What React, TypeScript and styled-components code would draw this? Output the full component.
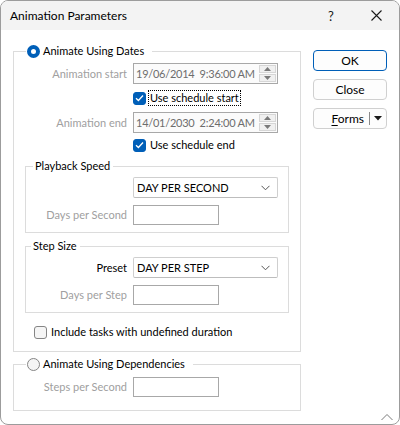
import React from "react";
import styled, { createGlobalStyle } from "styled-components";

const GlobalStyle = createGlobalStyle`
  html, body { margin: 0; padding: 0; background: #ffffff; }
  body {
    font-family: Lato, "Noto Sans", sans-serif;
    font-size: 11px;
    color: #000000;
  }
  * { box-sizing: border-box; }
`;

const Window = styled.div`
  position: relative;
  width: 400px;
  height: 425px;
  border: 1px solid #9c9c9c;
  border-radius: 8px;
  overflow: hidden;
  display: flex;
  flex-direction: column;
  background: #ffffff;
`;

const TitleBar = styled.div`
  height: 29px;
  flex: none;
  display: flex;
  align-items: center;
  background: #f3f3f3;
  padding-left: 9px;
`;

const TitleText = styled.div`
  flex: 1;
  font-size: 12px;
  line-height: 16px;
`;

const TitleButton = styled.div<{ $w: number }>`
  width: ${(p) => p.$w}px;
  height: 29px;
  display: flex;
  align-items: center;
  justify-content: center;
  font-size: 13px;
  color: #1a1a1a;
`;

const Body = styled.div`
  flex: 1;
  display: flex;
  align-items: flex-start;
  gap: 12px;
  padding: 13px 0 0 12px;
`;

const LeftColumn = styled.div`
  width: 288px;
  display: flex;
  flex-direction: column;
`;

const RightColumn = styled.div`
  width: 74px;
  margin-top: 7px;
  display: flex;
  flex-direction: column;
  gap: 8px;
`;

const Group = styled.fieldset<{ $inset?: boolean; $mt?: number; $pb?: number }>`
  margin: ${(p) => p.$mt ?? 0}px ${(p) => (p.$inset ? 11 : 0)}px 0 ${(p) => (p.$inset ? 11 : 0)}px;
  padding: 0 0 ${(p) => p.$pb ?? 0}px 0;
  border: 1px solid #dcdcdc;
  min-width: 0;
  display: flex;
  flex-direction: column;
`;

const Legend = styled.legend<{ $ml: number; $pl?: number; $pr?: number }>`
  margin-left: ${(p) => p.$ml}px;
  padding: 0 ${(p) => p.$pr ?? 3}px 0 ${(p) => p.$pl ?? 2}px;
  line-height: 16px;
  height: 16px;
  display: flex;
  align-items: center;
  gap: 3px;
  white-space: nowrap;
`;

const Row = styled.div<{ $label: number; $mt: number; $h?: number }>`
  display: grid;
  grid-template-columns: ${(p) => p.$label}px auto;
  column-gap: 6px;
  align-items: center;
  margin-top: ${(p) => p.$mt}px;
  height: ${(p) => p.$h ?? 21}px;
`;

const Label = styled.div<{ $disabled?: boolean }>`
  text-align: right;
  white-space: nowrap;
  color: ${(p) => (p.$disabled ? "#a0a0a0" : "#000000")};
  line-height: 16px;
`;

const DateField = styled.div`
  width: 145px;
  height: 21px;
  border: 1px solid #a8a8a8;
  background: #fbfbfb;
  display: flex;
  align-items: center;
  padding-left: 2px;
  color: #6d6d6d;
  white-space: pre;
`;

const DateText = styled.div`
  flex: 1;
  line-height: 16px;
  letter-spacing: -0.25px;
`;

const Spinner = styled.div`
  width: 17px;
  height: 17px;
  margin-right: 1px;
  display: flex;
  flex-direction: column;
  gap: 1px;
`;

const SpinHalf = styled.div`
  flex: 1;
  background: #f0f0f0;
  border: 1px solid #d6d6d6;
  display: flex;
  align-items: center;
  justify-content: center;
`;

const Combo = styled.div`
  width: 145px;
  height: 21px;
  border: 1px solid #cfcfcf;
  border-bottom-color: #bdbdbd;
  border-radius: 2px;
  background: #ffffff;
  display: flex;
  align-items: center;
  padding: 0 7px 0 3px;
`;

const ComboText = styled.div`
  flex: 1;
  line-height: 16px;
  white-space: nowrap;
`;

const TextBox = styled.div`
  width: 86px;
  height: 20px;
  border: 1px solid #a8a8a8;
  background: #ffffff;
`;

const CheckRow = styled.div<{ $ml: number; $mt: number }>`
  display: flex;
  align-items: center;
  gap: 2px;
  margin-left: ${(p) => p.$ml}px;
  margin-top: ${(p) => p.$mt}px;
  height: 16px;
`;

const Box = styled.div<{ $checked?: boolean }>`
  width: 13px;
  height: 13px;
  flex: none;
  border-radius: 3px;
  border: 1px solid ${(p) => (p.$checked ? "#005fb8" : "#858585")};
  background: ${(p) => (p.$checked ? "#005fb8" : "#f5f5f5")};
  display: flex;
  align-items: center;
  justify-content: center;
`;

const Radio = styled.div<{ $checked?: boolean }>`
  width: 13px;
  height: 13px;
  flex: none;
  border-radius: 50%;
  border: ${(p) => (p.$checked ? "4px solid #005fb8" : "1px solid #858585")};
  background: ${(p) => (p.$checked ? "#ffffff" : "#f5f5f5")};
`;

const CheckText = styled.span<{ $focus?: boolean }>`
  line-height: 14px;
  padding: 0 1px;
  border: 1px dotted ${(p) => (p.$focus ? "#000000" : "transparent")};
  white-space: nowrap;
`;

const Button = styled.div<{ $default?: boolean }>`
  height: 21px;
  border: 1px solid ${(p) => (p.$default ? "#005fb8" : "#d0d0d0")};
  border-radius: 4px;
  background: #fdfdfd;
  display: flex;
  align-items: center;
  justify-content: center;
  line-height: 16px;
  font-size: 12px;
`;

const SplitButton = styled(Button)`
  justify-content: flex-end;
  padding-right: 4px;
`;

const SplitText = styled.span`
  margin-right: 5px;
`;

const Divider = styled.div`
  width: 1px;
  height: 13px;
  background: #8a8a8a;
  margin-right: 4px;
`;

const Underline = styled.span`
  text-decoration: underline;
  text-underline-offset: 2px;
`;

const Grip = styled.div`
  position: absolute;
  right: 6px;
  bottom: 6px;
  width: 12px;
  height: 8px;
`;

const Chevron = () => (
  <svg width="9" height="6" viewBox="0 0 9 6">
    <path d="M0.5 0.8 L4.5 4.8 L8.5 0.8" fill="none" stroke="#555" strokeWidth="1" />
  </svg>
);

const Tick = () => (
  <svg width="9" height="8" viewBox="0 0 9 8">
    <path d="M1 4.2 L3.4 6.5 L8 1.5" fill="none" stroke="#fff" strokeWidth="1.3" />
  </svg>
);

const Up = () => (
  <svg width="7" height="4" viewBox="0 0 7 4">
    <path d="M0 4 L3.5 0 L7 4 Z" fill="#7a7a7a" />
  </svg>
);

const Down = () => (
  <svg width="7" height="4" viewBox="0 0 7 4">
    <path d="M0 0 L3.5 4 L7 0 Z" fill="#7a7a7a" />
  </svg>
);

const DateInput = ({ value }: { value: string }) => (
  <DateField>
    <DateText>{value}</DateText>
    <Spinner>
      <SpinHalf>
        <Up />
      </SpinHalf>
      <SpinHalf>
        <Down />
      </SpinHalf>
    </Spinner>
  </DateField>
);

const Select = ({ value }: { value: string }) => (
  <Combo>
    <ComboText>{value}</ComboText>
    <Chevron />
  </Combo>
);

export default function App() {
  return (
    <>
      <GlobalStyle />
      <Window>
        <TitleBar>
          <TitleText>Animation Parameters</TitleText>
          <TitleButton $w={46}>?</TitleButton>
          <TitleButton $w={45}>
            <svg width="11" height="11" viewBox="0 0 11 11">
              <path d="M0.5 0.5 L10.5 10.5 M10.5 0.5 L0.5 10.5" stroke="#1a1a1a" strokeWidth="1.1" />
            </svg>
          </TitleButton>
        </TitleBar>
        <Body>
          <LeftColumn>
            <Group $pb={11}>
              <Legend $ml={12} $pl={1} $pr={8}>
                <Radio $checked />
                <span>Animate Using Dates</span>
              </Legend>
              <Row $label={113} $mt={4}>
                <Label $disabled>Animation start</Label>
                <DateInput value={"19/06/2014  9:36:00 AM"} />
              </Row>
              <CheckRow $ml={119} $mt={6}>
                <Box $checked>
                  <Tick />
                </Box>
                <CheckText $focus>Use schedule start</CheckText>
              </CheckRow>
              <Row $label={113} $mt={6}>
                <Label $disabled>Animation end</Label>
                <DateInput value={"14/01/2030  2:24:00 AM"} />
              </Row>
              <CheckRow $ml={119} $mt={4}>
                <Box $checked>
                  <Tick />
                </Box>
                <CheckText>Use schedule end</CheckText>
              </CheckRow>

              <Group $inset $mt={5} $pb={7}>
                <Legend $ml={7}>Playback Speed</Legend>
                <Row $label={101} $mt={3}>
                  <span />
                  <Select value="DAY PER SECOND" />
                </Row>
                <Row $label={101} $mt={7} $h={20}>
                  <Label $disabled>Days per Second</Label>
                  <TextBox />
                </Row>
              </Group>

              <Group $inset $mt={5} $pb={7}>
                <Legend $ml={5}>Step Size</Legend>
                <Row $label={101} $mt={3}>
                  <Label>Preset</Label>
                  <Select value="DAY PER STEP" />
                </Row>
                <Row $label={101} $mt={7} $h={20}>
                  <Label $disabled>Days per Step</Label>
                  <TextBox />
                </Row>
              </Group>

              <CheckRow $ml={20} $mt={11}>
                <Box />
                <CheckText>Include tasks with undefined duration</CheckText>
              </CheckRow>
            </Group>

            <Group $mt={4} $pb={13}>
              <Legend $ml={12} $pl={1} $pr={8}>
                <Radio />
                <span>Animate Using Dependencies</span>
              </Legend>
              <Row $label={113} $mt={5} $h={20}>
                <Label $disabled>Steps per Second</Label>
                <TextBox />
              </Row>
            </Group>
          </LeftColumn>

          <RightColumn>
            <Button $default>OK</Button>
            <Button>Close</Button>
            <SplitButton>
              <SplitText>
                <Underline>F</Underline>orms
              </SplitText>
              <Divider />
              <svg width="8" height="5" viewBox="0 0 8 5">
                <path d="M0 0 L8 0 L4 4.5 Z" fill="#1a1a1a" />
              </svg>
            </SplitButton>
          </RightColumn>
        </Body>
        <Grip>
          <svg width="12" height="8" viewBox="0 0 12 8">
            <path d="M0.5 7 L6 1.5 L11.5 7" fill="none" stroke="#7a7a7a" strokeWidth="1" />
          </svg>
        </Grip>
      </Window>
    </>
  );
}
